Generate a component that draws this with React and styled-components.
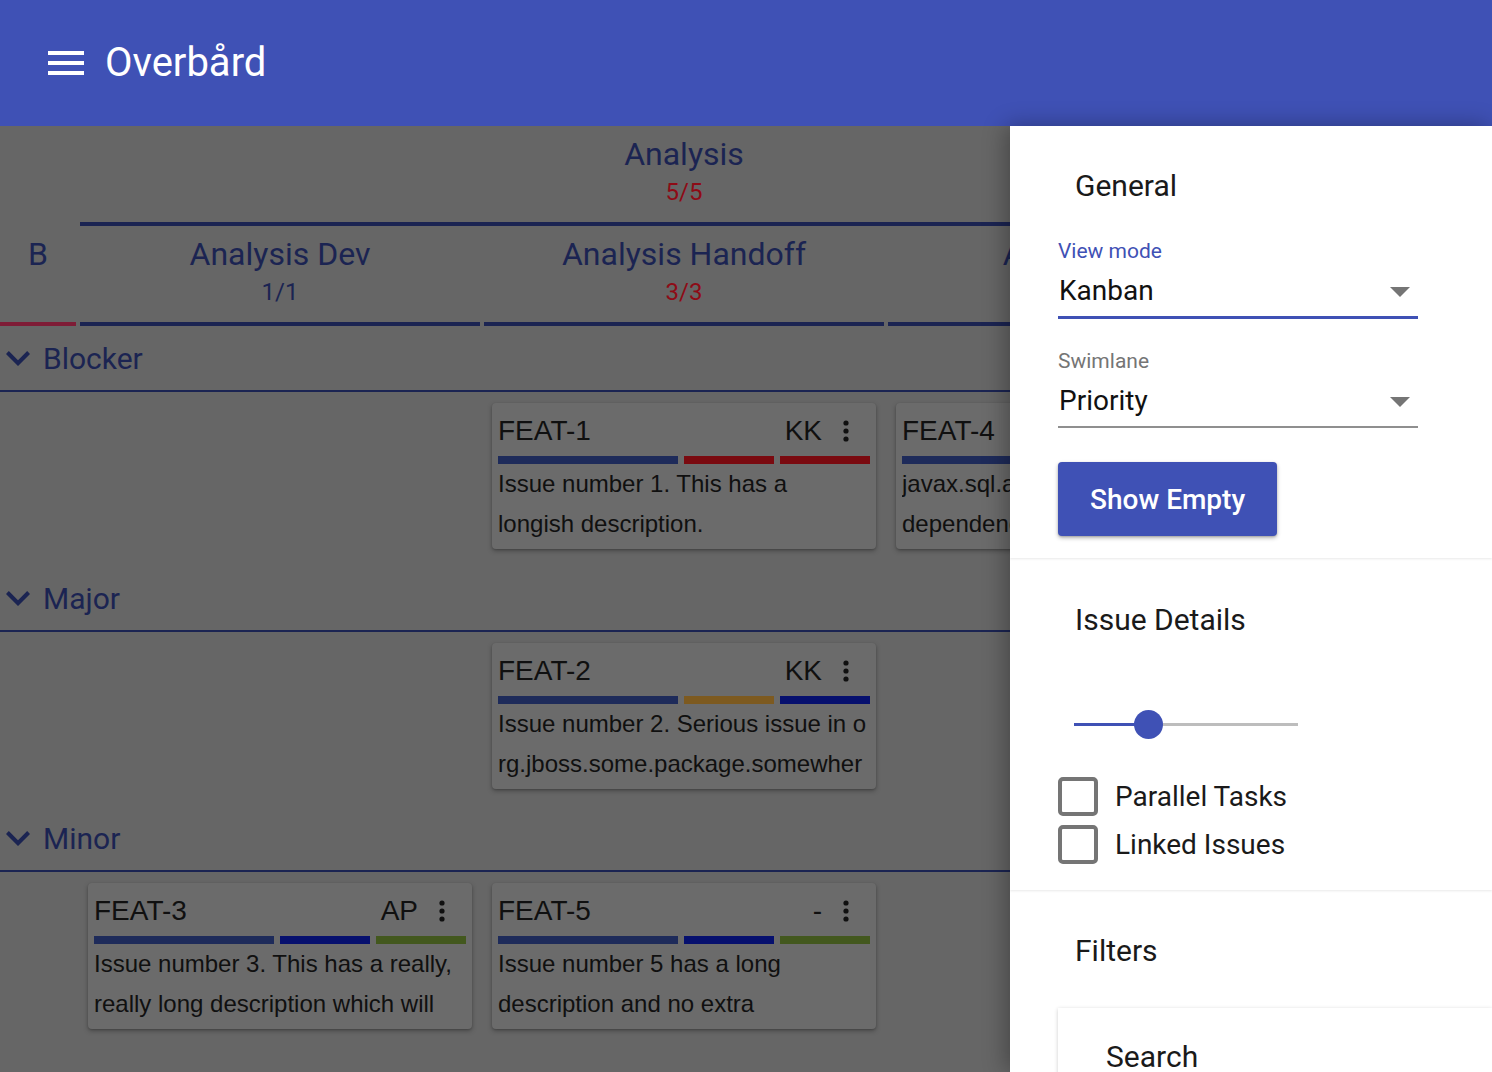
import React from "react";
import styled, { createGlobalStyle } from "styled-components";

const GlobalStyle = createGlobalStyle`
  html, body {
    margin: 0;
    padding: 0;
  }
  body {
    font-family: Roboto, "Noto Sans", sans-serif;
    overflow: hidden;
  }
`;

const NAVY = "#1b2452";
const RED = "#8e0b16";
const PRIMARY = "#3f51b5";

const BAR_COLORS = {
  navy: "#1e2b5a",
  red: "#7a0a10",
  blue: "#06106e",
  green: "#43581e",
  orange: "#7d5a20",
};

const Page = styled.div`
  height: 100vh;
  display: flex;
  flex-direction: column;
`;

const AppBar = styled.header`
  flex: none;
  height: 126px;
  background: ${PRIMARY};
  display: flex;
  align-items: center;
  padding-left: 42px;
  gap: 15px;
  color: #fff;
`;

const AppTitle = styled.h1`
  margin: 0 0 2px;
  font-size: 40px;
  font-weight: 400;
  letter-spacing: 0;
`;

const Main = styled.div`
  flex: 1;
  display: flex;
  min-height: 0;
`;

const Board = styled.section`
  flex: 1;
  min-width: 0;
  background: #666666;
  overflow: hidden;
`;

const Grid = styled.div`
  display: grid;
  grid-template-columns: 76px repeat(4, 400px);
  column-gap: 4px;
`;

const HeadCell = styled.div`
  grid-column: ${({ $span }) => $span || "auto"};
  height: 100px;
  box-sizing: border-box;
  padding-top: 8px;
  border-bottom: 4px solid ${({ $line }) => $line || "transparent"};
  text-align: center;
  color: ${NAVY};
`;

const HeadName = styled.div`
  font-size: 32px;
  line-height: 40px;
  white-space: nowrap;
`;

const HeadCount = styled.div`
  font-size: 24px;
  line-height: 36px;
  color: ${({ $over }) => ($over ? RED : NAVY)};
`;

const LaneHeader = styled.div`
  height: 64px;
  border-bottom: 2px solid ${NAVY};
  display: flex;
  align-items: center;
  padding-left: 6px;
  gap: 13px;
  color: ${NAVY};
  font-size: 30px;
`;

const LaneRow = styled(Grid)`
  padding: 11px 0 17px;
`;

const Cell = styled.div`
  grid-column: ${({ $col }) => $col};
  padding: 0 8px;
`;

const Card = styled.article`
  background: #6b6b6b;
  border-radius: 4px;
  padding: 6px 6px 5px;
  box-shadow: 0 2px 5px rgba(0, 0, 0, 0.28), 0 1px 2px rgba(0, 0, 0, 0.15);
  font-family: "Liberation Sans", Arial, sans-serif;
  color: #101010;
`;

const CardTop = styled.div`
  height: 44px;
  display: flex;
  align-items: center;
  font-size: 28px;
`;

const IssueKey = styled.span`
  flex: 1;
`;

const Assignee = styled.span`
  margin-right: 6px;
`;

const MenuButton = styled.span`
  width: 36px;
  margin-right: 6px;
  display: flex;
  justify-content: center;
`;

const Bars = styled.div`
  margin-top: 3px;
  height: 8px;
  display: grid;
  grid-template-columns: 2fr 1fr 1fr;
  gap: 6px;
`;

const Bar = styled.span`
  background: ${({ $color }) => BAR_COLORS[$color]};
`;

const Summary = styled.p`
  margin: 0;
  padding-right: 2px;
  font-size: 24px;
  line-height: 40px;
  max-height: 80px;
  overflow: hidden;
  word-break: ${({ $breakAll }) => ($breakAll ? "break-all" : "normal")};
`;

const Drawer = styled.aside`
  flex: none;
  width: 482px;
  background: #fff;
  position: relative;
  z-index: 2;
  overflow: hidden;
  box-shadow: -4px 0 22px rgba(0, 0, 0, 0.32);
`;

const Section = styled.div`
  padding: ${({ $top }) => $top}px 48px ${({ $bottom }) => $bottom}px;
  margin-bottom: 3px;
  background: #fff;
  box-shadow: 0 1px 2px rgba(0, 0, 0, 0.09);
`;

const SectionTitle = styled.h2`
  margin: 0;
  padding-left: 17px;
  font-size: 30px;
  line-height: 40px;
  font-weight: 400;
  color: #1a1a1a;
`;

const Field = styled.div`
  margin-top: ${({ $top }) => $top}px;
  width: 360px;
`;

const FieldLabel = styled.label`
  display: block;
  font-size: 21px;
  line-height: 24px;
  color: ${({ $focused }) => ($focused ? PRIMARY : "#757575")};
`;

const SelectBox = styled.div`
  display: flex;
  align-items: center;
  padding: 10px 0 7px 1px;
  border-bottom: ${({ $focused }) =>
    $focused ? `3px solid ${PRIMARY}` : "2px solid #8f8f8f"};
  font-size: 28px;
  line-height: 36px;
  color: #111;
`;

const SelectValue = styled.span`
  flex: 1;
`;

const ArrowIcon = styled.svg`
  margin-right: 8px;
  margin-top: 2px;
`;

const ActionButton = styled.button`
  margin-top: 34px;
  height: 74px;
  padding: 0 32px;
  border: 0;
  border-radius: 4px;
  background: ${PRIMARY};
  color: #fff;
  font-family: Roboto, sans-serif;
  font-size: 28px;
  font-weight: 500;
  box-shadow: 0 2px 4px rgba(0, 0, 0, 0.28), 0 1px 2px rgba(0, 0, 0, 0.16);
`;

const Slider = styled.div`
  margin: 60px 0 0 16px;
  width: 224px;
  height: 48px;
  display: flex;
  align-items: center;
`;

const SliderFill = styled.span`
  height: 3px;
  background: ${PRIMARY};
`;

const SliderThumb = styled.span`
  flex: none;
  width: 29px;
  height: 29px;
  margin: 0 -14.5px;
  border-radius: 50%;
  background: ${PRIMARY};
  position: relative;
  z-index: 1;
`;

const SliderRest = styled.span`
  flex: 1;
  height: 3px;
  background: #bdbdbd;
`;

const CheckList = styled.div`
  margin-top: 24px;
`;

const CheckRow = styled.label`
  height: 48px;
  display: flex;
  align-items: center;
  font-size: 28px;
  color: #1a1a1a;
`;

const CheckBox = styled.span`
  flex: none;
  width: 40px;
  height: 39px;
  box-sizing: border-box;
  border: 4px solid #757575;
  border-radius: 5px;
  margin-right: 17px;
`;

const SubPanel = styled.div`
  margin: 37px -48px 0 0;
  height: 96px;
  display: flex;
  align-items: center;
  padding-left: 48px;
  background: #fff;
  box-shadow: 0 1px 4px rgba(0, 0, 0, 0.2);
  font-size: 30px;
  color: #1a1a1a;
`;

const columns = [
  { name: "B", line: "#7e1c36" },
  { name: "Analysis Dev", count: "1/1" },
  { name: "Analysis Handoff", count: "3/3", over: true },
  { name: "Analysis QA", count: "1/2" },
  { name: "Development", count: "0/4" },
];

const lanes = [
  {
    name: "Blocker",
    issues: [
      {
        key: "FEAT-1",
        col: 3,
        who: "KK",
        bars: ["navy", "red", "red"],
        text: "Issue number 1. This has a longish description.",
      },
      {
        key: "FEAT-4",
        col: 4,
        who: "AP",
        bars: ["navy", "red", "blue"],
        text: "javax.sql.api.ConnectionPoolData dependency missing",
      },
    ],
  },
  {
    name: "Major",
    issues: [
      {
        key: "FEAT-2",
        col: 3,
        who: "KK",
        bars: ["navy", "orange", "blue"],
        breakAll: true,
        text: "Issue number 2. Serious issue in org.jboss.some.package.somewhere.ClassName",
      },
    ],
  },
  {
    name: "Minor",
    issues: [
      {
        key: "FEAT-3",
        col: 2,
        who: "AP",
        bars: ["navy", "blue", "green"],
        text: "Issue number 3. This has a really, really long description which will be cut off",
      },
      {
        key: "FEAT-5",
        col: 3,
        who: "-",
        bars: ["navy", "blue", "green"],
        text: "Issue number 5 has a long description and no extra information",
      },
    ],
  },
];

const MenuIcon = () => (
  <svg width="48" height="48" viewBox="0 0 24 24" fill="#fff">
    <path d="M3 18h18v-2H3v2zm0-5h18v-2H3v2zm0-7v2h18V6H3z" />
  </svg>
);

const Chevron = () => (
  <svg width="24" height="15" viewBox="6 8.59 12 7.41" fill={NAVY}>
    <path d="M16.59 8.59L12 13.17 7.41 8.59 6 10l6 6 6-6z" />
  </svg>
);

const DotsIcon = () => (
  <svg width="8" height="22" viewBox="0 0 8 22" fill="#101010">
    <circle cx="4" cy="3" r="2.6" />
    <circle cx="4" cy="11" r="2.6" />
    <circle cx="4" cy="19" r="2.6" />
  </svg>
);

const DropArrow = () => (
  <ArrowIcon width="20" height="10" viewBox="7 10 10 5" fill="#757575">
    <path d="M7 10l5 5 5-5z" />
  </ArrowIcon>
);

const IssueCard = ({ issue }) => (
  <Card>
    <CardTop>
      <IssueKey>{issue.key}</IssueKey>
      <Assignee>{issue.who}</Assignee>
      <MenuButton>
        <DotsIcon />
      </MenuButton>
    </CardTop>
    <Bars>
      {issue.bars.map((c, i) => (
        <Bar key={i} $color={c} />
      ))}
    </Bars>
    <Summary $breakAll={issue.breakAll}>{issue.text}</Summary>
  </Card>
);

const Select = ({ label, value, focused, top }) => (
  <Field $top={top}>
    <FieldLabel $focused={focused}>{label}</FieldLabel>
    <SelectBox $focused={focused}>
      <SelectValue>{value}</SelectValue>
      <DropArrow />
    </SelectBox>
  </Field>
);

const DetailSlider = ({ value, max }) => (
  <Slider>
    <SliderFill style={{ width: (224 * value) / max }} />
    <SliderThumb />
    <SliderRest />
  </Slider>
);

export default function App() {
  return (
    <Page>
      <GlobalStyle />
      <AppBar>
        <MenuIcon />
        <AppTitle>Overbård</AppTitle>
      </AppBar>
      <Main>
        <Board>
          <Grid>
            <HeadCell />
            <HeadCell $span="2 / span 3" $line={NAVY}>
              <HeadName>Analysis</HeadName>
              <HeadCount $over>5/5</HeadCount>
            </HeadCell>
            <HeadCell />
            {columns.map((c) => (
              <HeadCell key={c.name} $line={c.line || NAVY}>
                <HeadName>{c.name}</HeadName>
                {c.count && <HeadCount $over={c.over}>{c.count}</HeadCount>}
              </HeadCell>
            ))}
          </Grid>
          {lanes.map((lane) => (
            <div key={lane.name}>
              <LaneHeader>
                <Chevron />
                {lane.name}
              </LaneHeader>
              <LaneRow>
                {lane.issues.map((issue) => (
                  <Cell key={issue.key} $col={issue.col}>
                    <IssueCard issue={issue} />
                  </Cell>
                ))}
              </LaneRow>
            </div>
          ))}
        </Board>
        <Drawer>
          <Section $top={40} $bottom={22}>
            <SectionTitle>General</SectionTitle>
            <Select label="View mode" value="Kanban" focused top={33} />
            <Select label="Swimlane" value="Priority" top={30} />
            <ActionButton>Show Empty</ActionButton>
          </Section>
          <Section $top={39} $bottom={22}>
            <SectionTitle>Issue Details</SectionTitle>
            <DetailSlider value={1} max={3} />
            <CheckList>
              <CheckRow>
                <CheckBox />
                Parallel Tasks
              </CheckRow>
              <CheckRow>
                <CheckBox />
                Linked Issues
              </CheckRow>
            </CheckList>
          </Section>
          <Section $top={38} $bottom={40}>
            <SectionTitle>Filters</SectionTitle>
            <SubPanel>Search</SubPanel>
          </Section>
        </Drawer>
      </Main>
    </Page>
  );
}
